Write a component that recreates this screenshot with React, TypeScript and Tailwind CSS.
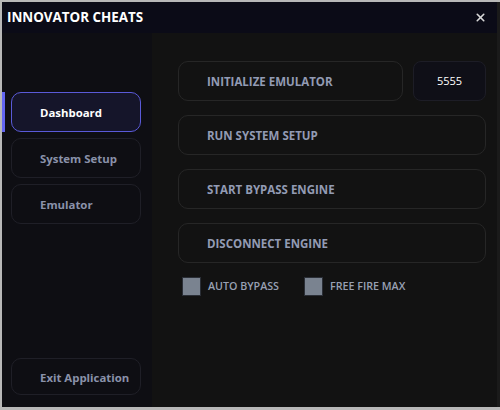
import { X } from "lucide-react"

const navItems = [
  { label: "Dashboard", active: true },
  { label: "System Setup", active: false },
  { label: "Emulator", active: false },
]

function Check({ label }: { label: string }) {
  return (
    <div className="flex items-center gap-[7px]">
      <div className="h-[19px] w-[19px] border border-[#2a2e36] bg-[#7a8390]" />
      <span className="text-[10.7px] font-semibold text-[#98a0b3]">{label}</span>
    </div>
  )
}

export default function App() {
  return (
    <div
      className="flex h-[410px] w-[500px] bg-[#b8b8b8] pt-[2px] pl-[2px] pb-[3px]"
      style={{ fontFamily: '"Open Sans", "Noto Sans", sans-serif' }}
    >
      <div className="flex w-[495px] flex-col bg-[#121212]">
        {/* title bar */}
        <div className="flex h-[31px] items-center justify-between bg-[#0b0b17] pl-[5px] pr-[10px]">
          <span className="text-[13.4px] font-bold text-white">INNOVATOR CHEATS</span>
          <X className="h-[13px] w-[13px] text-[#d8d8d8]" strokeWidth={3} />
        </div>

        <div className="flex flex-1">
          {/* sidebar */}
          <div className="flex w-[150px] flex-col bg-[#0e0e13] pt-[59px] pb-[12px]">
            <div className="flex flex-col gap-[6px]">
              {navItems.map((item) => (
                <div key={item.label} className="relative flex">
                  {item.active && <div className="absolute left-0 top-0 h-full w-[3px] bg-[#6366f1]" />}
                  <div
                    className={`ml-[9px] flex h-[40px] w-[130px] items-center rounded-[10px] border pt-[2px] pl-[28px] text-[11.4px] font-bold ${
                      item.active
                        ? "border-[#5a5ad8] bg-[#15152a] text-white"
                        : "border-[#1f1f27] text-[#8a92aa]"
                    }`}
                  >
                    {item.label}
                  </div>
                </div>
              ))}
            </div>
            <div className="mt-auto ml-[9px] flex h-[37px] w-[130px] items-center rounded-[10px] border border-[#1f1f27] pt-[2px] pl-[28px] text-[11.4px] font-bold text-[#8a92aa]">
              Exit Application
            </div>
          </div>

          {/* main */}
          <div className="flex flex-1 flex-col gap-[14px] pt-[28px] pl-[26px] pr-[11px]">
            <div className="flex gap-[10px]">
              <div className="flex h-[40px] w-[225px] items-center rounded-[10px] border border-[#262626] pt-[1px] pl-[28px] text-[11.5px] font-bold text-[#929bb4]">
                INITIALIZE EMULATOR
              </div>
              <div className="flex h-[40px] flex-1 items-center justify-center rounded-[8px] border border-[#1d1d26] bg-[#0f0f17] text-[11px] text-white">
                5555
              </div>
            </div>
            {["RUN SYSTEM SETUP", "START BYPASS ENGINE", "DISCONNECT ENGINE"].map((t) => (
              <div
                key={t}
                className="flex h-[40px] items-center rounded-[10px] border border-[#262626] pt-[1px] pl-[28px] text-[11.5px] font-bold text-[#929bb4]"
              >
                {t}
              </div>
            ))}
            <div className="flex gap-[25px] pl-[4px]">
              <Check label="AUTO BYPASS" />
              <Check label="FREE FIRE MAX" />
            </div>
          </div>
        </div>
      </div>
      <div className="flex-1 bg-[#1a1a1a]" />
    </div>
  )
}
